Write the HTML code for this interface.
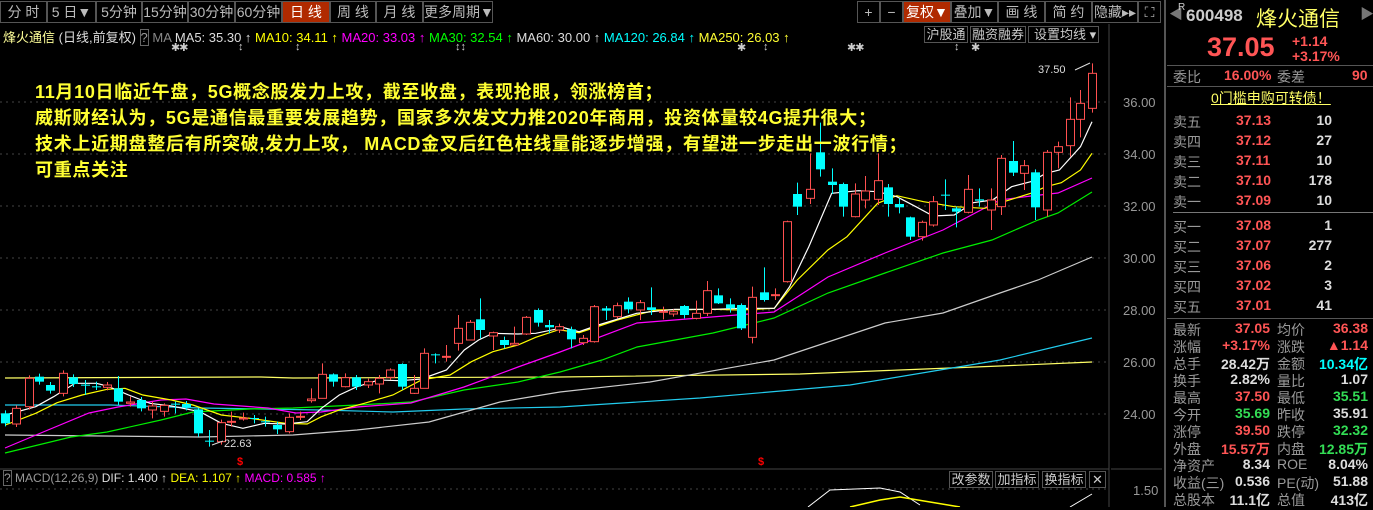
<!DOCTYPE html>
<html><head><meta charset="utf-8">
<style>
*{margin:0;padding:0;box-sizing:border-box}
body{width:1373px;height:507px;background:#000;overflow:hidden;position:relative;font-family:"Liberation Sans","Noto Sans CJK SC",sans-serif;color:#ccc;font-size:13px}
.a{position:absolute;white-space:nowrap}
.tb{position:absolute;top:1px;height:22px;border:1px solid #555;background:#000;color:#bbb;font-size:14px;line-height:20px;text-align:center;white-space:nowrap;overflow:hidden}
.tb.on{background:#b02a00;color:#fff}
.btn{position:absolute;height:17px;border:1px solid #555;color:#ccc;font-size:13px;line-height:15px;text-align:center;top:26px;white-space:nowrap;overflow:hidden}
.ann{position:absolute;left:35px;color:#ffff33;font-size:18px;letter-spacing:0.7px;white-space:nowrap;font-weight:bold}
.r{color:#ff5555}.g{color:#33dd55}.w{color:#ddd}.gr{color:#999}.cy{color:#00ffff}
.rp{position:absolute;font-size:14px;white-space:nowrap;font-weight:bold}
.lab{font-weight:normal;color:#999}
</style></head><body>
<div class="tb" style="left:0;width:47px">分 时</div>
<div class="tb" style="left:47px;width:49px">5 日▼</div>
<div class="tb" style="left:96px;width:46px">5分钟</div>
<div class="tb" style="left:142px;width:46px">15分钟</div>
<div class="tb" style="left:188px;width:47px">30分钟</div>
<div class="tb" style="left:235px;width:47px">60分钟</div>
<div class="tb on" style="left:282px;width:48px">日 线</div>
<div class="tb" style="left:330px;width:46px">周 线</div>
<div class="tb" style="left:376px;width:47px">月 线</div>
<div class="tb" style="left:423px;width:70px">更多周期▼</div>
<div class="tb" style="left:857px;width:23px">+</div>
<div class="tb" style="left:880px;width:23px">−</div>
<div class="tb on" style="left:903px;width:48px">复权▼</div>
<div class="tb" style="left:951px;width:47px">叠加▼</div>
<div class="tb" style="left:998px;width:47px">画 线</div>
<div class="tb" style="left:1045px;width:47px">简 约</div>
<div class="tb" style="left:1092px;width:46px">隐藏▸▸</div>
<div class="tb" style="left:1138px;width:23px">⛶</div>
<div class="a" style="left:3px;top:27px;font-size:13px;color:#ffff99">烽火通信 <span style="color:#ddd">(日线,前复权)</span> <span style="border:1px solid #666;color:#999">?</span> <span style="color:#888">MA</span> <span class="w">MA5: 35.30 ↑</span> <span style="color:#ff0">MA10: 34.11 ↑</span> <span style="color:#f0f">MA20: 33.03 ↑</span> <span style="color:#0f0">MA30: 32.54 ↑</span> <span class="w">MA60: 30.00 ↑</span> <span class="cy">MA120: 26.84 ↑</span> <span style="color:#ff3">MA250: 26.03 ↑</span></div>
<div class="btn" style="left:924px;width:44px">沪股通</div>
<div class="btn" style="left:970px;width:56px">融资融券</div>
<div class="btn" style="left:1028px;width:71px;text-align:left;padding-left:5px">设置均线 ▾</div>
<div class="a" style="left:171px;top:41px;font-size:11px;color:#ccc;letter-spacing:-1px">✱✱</div>
<div class="a" style="left:238px;top:41px;font-size:11px;color:#ccc">↕</div>
<div class="a" style="left:295px;top:41px;font-size:11px;color:#ccc">↕</div>
<div class="a" style="left:455px;top:41px;font-size:11px;color:#ccc">↕↕</div>
<div class="a" style="left:737px;top:41px;font-size:11px;color:#ccc">✱</div>
<div class="a" style="left:763px;top:41px;font-size:11px;color:#ccc">↕</div>
<div class="a" style="left:847px;top:41px;font-size:11px;color:#ccc;letter-spacing:-1px">✱✱</div>
<div class="a" style="left:954px;top:41px;font-size:11px;color:#ccc">↕</div>
<div class="a" style="left:971px;top:41px;font-size:11px;color:#ccc">✱</div>

<svg id="ch" width="1373" height="507" style="position:absolute;left:0;top:0" xmlns="http://www.w3.org/2000/svg">
<g stroke="#444" stroke-dasharray="2,4" stroke-width="1">
<line x1="0" y1="102" x2="1108" y2="102"/><line x1="0" y1="154" x2="1108" y2="154"/><line x1="0" y1="206" x2="1108" y2="206"/><line x1="0" y1="258" x2="1108" y2="258"/><line x1="0" y1="310" x2="1108" y2="310"/><line x1="0" y1="362" x2="1108" y2="362"/><line x1="0" y1="414" x2="1108" y2="414"/><line x1="0" y1="489" x2="1108" y2="489"/>
</g>
<line x1="1109" y1="24" x2="1109" y2="507" stroke="#444"/>
<line x1="0" y1="469" x2="1109" y2="469" stroke="#444"/>
<line x1="1111" y1="469" x2="1162" y2="469" stroke="#444"/>
<line x1="1165" y1="0" x2="1165" y2="507" stroke="#555" stroke-width="2"/>
<g fill="#999" font-size="13" font-family="Liberation Sans">
<text x="1123" y="107">36.00</text><text x="1123" y="159">34.00</text><text x="1123" y="211">32.00</text><text x="1123" y="263">30.00</text><text x="1123" y="315">28.00</text><text x="1123" y="367">26.00</text><text x="1123" y="419">24.00</text><text x="1133" y="495">1.50</text>
</g>
<g id="ma" fill="none" stroke-width="1.2"></g>
<g id="cd"></g>
<text x="1038" y="73" fill="#ddd" font-size="11">37.50</text>
<line x1="1075" y1="70" x2="1090" y2="63" stroke="#ddd"/>
<text x="224" y="447" fill="#ddd" font-size="11">22.63</text>
<line x1="212" y1="445" x2="223" y2="441" stroke="#ddd"/>
<text x="237" y="465" fill="#f00" font-size="11" font-weight="bold">$</text>
<text x="758" y="465" fill="#f00" font-size="11" font-weight="bold">$</text>
<polyline fill="none" stroke="#fff" points="808,507 830,490 880,488 900,492 920,505"/>
<polyline fill="none" stroke="#ff0" stroke-width="1.5" points="850,507 880,500 900,497 930,502 960,507"/>
<polyline fill="none" stroke="#fff" points="1070,507 1092,494"/>
</svg>

<div class="a" style="left:3px;top:471px;font-size:12px"><span style="border:1px solid #666;color:#999">?</span> <span class="gr">MACD(12,26,9)</span> <span class="w">DIF: 1.400 ↑</span> <span style="color:#ff0">DEA: 1.107 ↑</span> <span style="color:#f0f">MACD: 0.585 ↑</span></div>
<div class="btn" style="left:949px;top:471px;width:44px">改参数</div>
<div class="btn" style="left:995px;top:471px;width:44px">加指标</div>
<div class="btn" style="left:1042px;top:471px;width:44px">换指标</div>
<div class="btn" style="left:1089px;top:471px;width:17px">✕</div>

<div class="ann" style="top:78px">11月10日临近午盘，5G概念股发力上攻，截至收盘，表现抢眼，领涨榜首；</div>
<div class="ann" style="top:104px">威斯财经认为，5G是通信最重要发展趋势，国家多次发文力推2020年商用，投资体量较4G提升很大；</div>
<div class="ann" style="top:130px">技术上近期盘整后有所突破,发力上攻， MACD金叉后红色柱线量能逐步增强，有望进一步走出一波行情；</div>
<div class="ann" style="top:156px">可重点关注</div>

<div class="a" style="left:1169px;top:4px;color:#777;font-size:14px">◀</div>
<div class="a" style="left:1178px;top:2px;color:#ccc;font-size:10px">R</div>
<div class="a" style="left:1186px;top:6px;color:#ccc;font-size:17px;font-weight:bold">600498</div>
<div class="a" style="left:1256px;top:3px;color:#ffff66;font-size:21px">烽火通信</div>
<div class="a" style="left:1360px;top:4px;color:#777;font-size:14px">▶</div>
<div class="a r" style="left:1207px;top:32px;font-size:27px;font-weight:bold">37.05</div>
<div class="a r" style="left:1292px;top:33px;font-size:14px;font-weight:bold">+1.14</div>
<div class="a r" style="left:1292px;top:48px;font-size:14px;font-weight:bold">+3.17%</div>
<div class="a" style="left:1167px;top:65px;width:206px;border-top:1px solid #555"></div>
<div class="rp lab" style="left:1173px;top:67px">委比</div><div class="rp r" style="left:1224px;top:67px">16.00%</div><div class="rp lab" style="left:1277px;top:67px">委差</div><div class="rp r" style="left:1352px;top:67px">90</div>
<div class="a" style="left:1167px;top:86px;width:206px;border-top:1px solid #555"></div>
<div class="a" style="left:1211px;top:88px;color:#ffff66;font-size:14px;text-decoration:underline">0门槛申购可转债！</div>
<div id="ob"></div>
<div class="a" style="left:1173px;top:212px;width:200px;border-top:1px solid #777"></div>
<div class="a" style="left:1167px;top:318px;width:206px;border-top:1px solid #555"></div>
<div id="st"></div>

<script>
var NS="http://www.w3.org/2000/svg";
function el(p,t,a){var e=document.createElementNS(NS,t);for(var k in a)e.setAttribute(k,a[k]);p.appendChild(e);return e}
var ma=document.getElementById('ma'),cd=document.getElementById('cd');
function z4(a){return a.map(function(p){return [p[0]/2.8,280+p[1]/3]})}
function z5(a){return a.map(function(p){return [560+p[0]/2.613,60+p[1]/3]})}
function pl(pts,c){el(ma,'polyline',{points:pts.map(function(p){return p[0].toFixed(1)+','+p[1].toFixed(1)}).join(' '),stroke:c})}
pl([[5,378],[261,377],[293,378],[560,377],[800,374],[900,370],[1000,366],[1092,362]],'#ffff66');
pl([[5,405],[111,405],[200,408],[321,410],[393,412],[464,409],[560,407],[700,398],[850,385],[1000,360],[1092,338]],'#22ccee');
pl([[5,435],[200,437],[293,435],[357,430],[429,422],[500,402],[560,392],[650,382],[774,360],[885,323],[943,313],[1000,293],[1038,280],[1092,257]],'#cccccc');
pl([[5,453],[71,437],[107,432],[161,420],[193,412],[250,409],[293,408],[357,405],[411,402],[464,390],[518,382],[560,372],[602,360],[637,347],[713,333],[774,318],[828,293],[885,273],[943,253],[992,240],[1038,220],[1058,213],[1092,192]],'#00ee00');
pl([[5,448],[36,435],[89,413],[118,407],[161,400],[186,399],[214,404],[268,408],[296,413],[321,412],[357,407],[411,403],[464,387],[518,367],[560,352],[637,323],[774,312],[828,277],[885,253],[943,230],[1000,200],[1031,196],[1058,193],[1092,178]],'#ff00ff');
pl(z4([[15,435],[100,400],[160,368],[230,345],[300,328],[350,325],[400,345],[480,360],[540,375],[620,405],[700,415],[800,430],[860,432],[900,410],[950,390],[1020,370],[1100,345],[1180,300],[1260,285],[1320,245],[1380,215],[1450,195],[1500,172],[1568,148]]).concat(z5([[0,810],[50,818],[150,780],[250,750],[400,748],[470,750],[560,745],[620,660],[700,570],[750,530],[830,430],[880,407],[950,425],[1030,440],[1110,445],[1160,425],[1230,400],[1270,380],[1310,368],[1360,330],[1390,280]])),'#ffff00');
pl(z4([[15,405],[100,380],[150,350],[210,310],[270,310],[300,318],[360,345],[420,370],[480,378],[560,395],[620,430],[680,445],[740,430],[800,432],[860,425],[900,385],[950,345],[1000,320],[1060,300],[1120,302],[1180,297],[1250,270],[1300,210],[1340,180],[1380,160],[1450,162],[1500,160],[1568,145]]).concat(z5([[0,800],[50,815],[100,795],[200,760],[300,748],[400,748],[470,745],[560,745],[600,680],[650,560],[710,400],[780,392],[830,395],[880,410],[930,440],[975,468],[1030,465],[1080,428],[1130,420],[1180,380],[1230,365],[1270,340],[1305,330],[1360,260],[1390,185]])),'#ffffff');
var c4=[[15,400,430,'c'],[45,385,432,'r'],[80,295,380,'r'],[110,290,305,'c'],[140,315,332,'c'],[175,280,340,'r'],[205,292,312,'c'],[237,314,316,'c',300,345],[270,319,321,'c',305,330],[300,315,322,'r'],[330,325,365,'c',288,375],[365,366,370,'r',350,380],[395,360,385,'c'],[425,378,390,'r',365,415],[460,376,394,'r',370,410],[490,371,373,'c',365,400],[520,372,382,'c'],[555,388,460,'c',385,470],[585,482,484,'c',450,500],[618,428,485,'r'],[648,424,426,'r',395,440],[680,414,416,'r',398,422],[710,414,416,'c',405,430],[742,424,426,'c',410,440],[775,435,448,'c',425,462],[808,412,455,'r',400,460],[840,409,411,'r',395,420],[870,357,362,'r',325,368],[902,283,355,'r',250,355],[933,283,305,'c',280,320],[967,293,320,'r',280,322],[998,292,320,'c',285,330],[1030,305,315,'r'],[1062,295,312,'r',285,340],[1093,270,292,'r',265,300],[1125,252,320,'c',250,330],[1158,325,340,'r',285,342],[1188,220,325,'r',205,325],[1218,223,225,'c',220,250],[1250,229,231,'r',195,245],[1283,145,190,'r',105,212],[1315,127,180,'r',120,180],[1345,118,150,'c',55,175],[1380,158,168,'r',155,210],[1410,180,195,'c',170,205],[1440,190,195,'r',140,195],[1473,112,162,'r',108,165],[1505,90,128,'c',85,140],[1537,135,142,'c',120,160],[1565,140,150,'r']];
var c5=[[30,808,838,'c',800,865],[60,835,848,'r',825,855],[90,740,845,'r',735,848],[120,745,752,'c',738,780],[148,737,770,'r',728,775],[178,725,748,'c',712,760],[208,728,750,'r',720,780],[238,742,750,'c',682,765],[268,754,756,'r',740,778],[296,755,762,'r',748,770],[325,738,765,'c',735,775],[355,760,775,'r',722,778],[385,692,760,'r',663,768],[413,706,730,'c',685,732],[443,733,745,'c',715,758],[473,735,805,'c',730,810],[503,712,832,'r',680,850],[533,697,720,'c',622,725],[563,704,706,'r',685,720],[592,485,665,'r',482,668],[620,402,440,'c',368,465],[652,388,415,'r',280,432],[680,277,328,'c',188,350],[710,365,375,'c',325,402],[740,372,440,'c',368,470],[770,402,470,'r',370,472],[798,393,420,'r',348,445],[830,362,418,'r',280,435],[858,382,432,'c',372,470],[886,432,442,'c',415,460],[915,472,530,'c',470,540],[945,487,530,'r',482,542],[975,425,495,'r',408,500],[1005,404,406,'c',358,450],[1035,445,455,'c',440,502],[1065,388,457,'r',345,460],[1095,418,422,'c',385,440],[1125,420,450,'r',385,510],[1153,295,440,'r',285,465],[1183,303,338,'c',243,348],[1213,317,340,'r',300,390],[1242,337,442,'c',328,480],[1272,277,450,'r',270,470],[1302,260,277,'r',245,325],[1332,178,257,'r',112,290],[1360,130,178,'r',90,232],[1390,40,145,'r',10,158]];
function draw(arr,f){arr.forEach(function(c){var a=f([[c[0],c[1]]])[0],b=f([[c[0],c[2]]])[0];var x=Math.round(a[0])+0.5;var col=c[3]=='r'?'#ff5050':'#00ffff';
 var hi=c[4]!==undefined?f([[c[0],c[4]]])[0][1]:a[1]-3,lo=c[5]!==undefined?f([[c[0],c[5]]])[0][1]:b[1]+3;
 el(cd,'line',{x1:x,x2:x,y1:hi,y2:lo,stroke:col});
 var h=Math.max(1,b[1]-a[1]);
 if(c[3]=='r'){el(cd,'rect',{x:x-4,y:a[1],width:8,height:h,fill:'#000',stroke:col})}
 else{el(cd,'rect',{x:x-4.5,y:a[1],width:9,height:h,fill:col})}
});}
draw(c4,z4);draw(c5,z5);
var ob=[['卖五','37.13','10'],['卖四','37.12','27'],['卖三','37.11','10'],['卖二','37.10','178'],['卖一','37.09','10'],['买一','37.08','1'],['买二','37.07','277'],['买三','37.06','2'],['买四','37.02','3'],['买五','37.01','41']];
var h='';ob.forEach(function(r,i){var y=(i<5?112+i*20:217+(i-5)*20);
h+='<div class="rp lab" style="left:1173px;top:'+y+'px">'+r[0]+'</div><div class="rp r" style="left:1236px;top:'+y+'px">'+r[1]+'</div><div class="rp w" style="top:'+y+'px;right:'+(1373-1332)+'px">'+r[2]+'</div>'});
document.getElementById('ob').innerHTML=h;
var st=[['最新','37.05','r','均价','36.38','r'],['涨幅','+3.17%','r','涨跌','▲1.14','r'],['总手','28.42万','w','金额','10.34亿','cy'],['换手','2.82%','w','量比','1.07','w'],['最高','37.50','r','最低','35.51','g'],['今开','35.69','g','昨收','35.91','w'],['涨停','39.50','r','跌停','32.32','g'],['外盘','15.57万','r','内盘','12.85万','g'],['净资产','8.34','w','ROE','8.04%','w'],['收益(三)','0.536','w','PE(动)','51.88','w'],['总股本','11.1亿','w','总值','413亿','w']];
h='';st.forEach(function(r,i){var y=320+i*17;
h+='<div class="rp lab" style="left:1173px;top:'+y+'px">'+r[0]+'</div><div class="rp '+r[2]+'" style="right:'+(1373-1270)+'px;top:'+y+'px">'+r[1]+'</div><div class="rp lab" style="left:1277px;top:'+y+'px">'+r[3]+'</div><div class="rp '+r[5]+'" style="right:5px;top:'+y+'px">'+r[4]+'</div>'});
document.getElementById('st').innerHTML=h;
</script>
</body></html>
